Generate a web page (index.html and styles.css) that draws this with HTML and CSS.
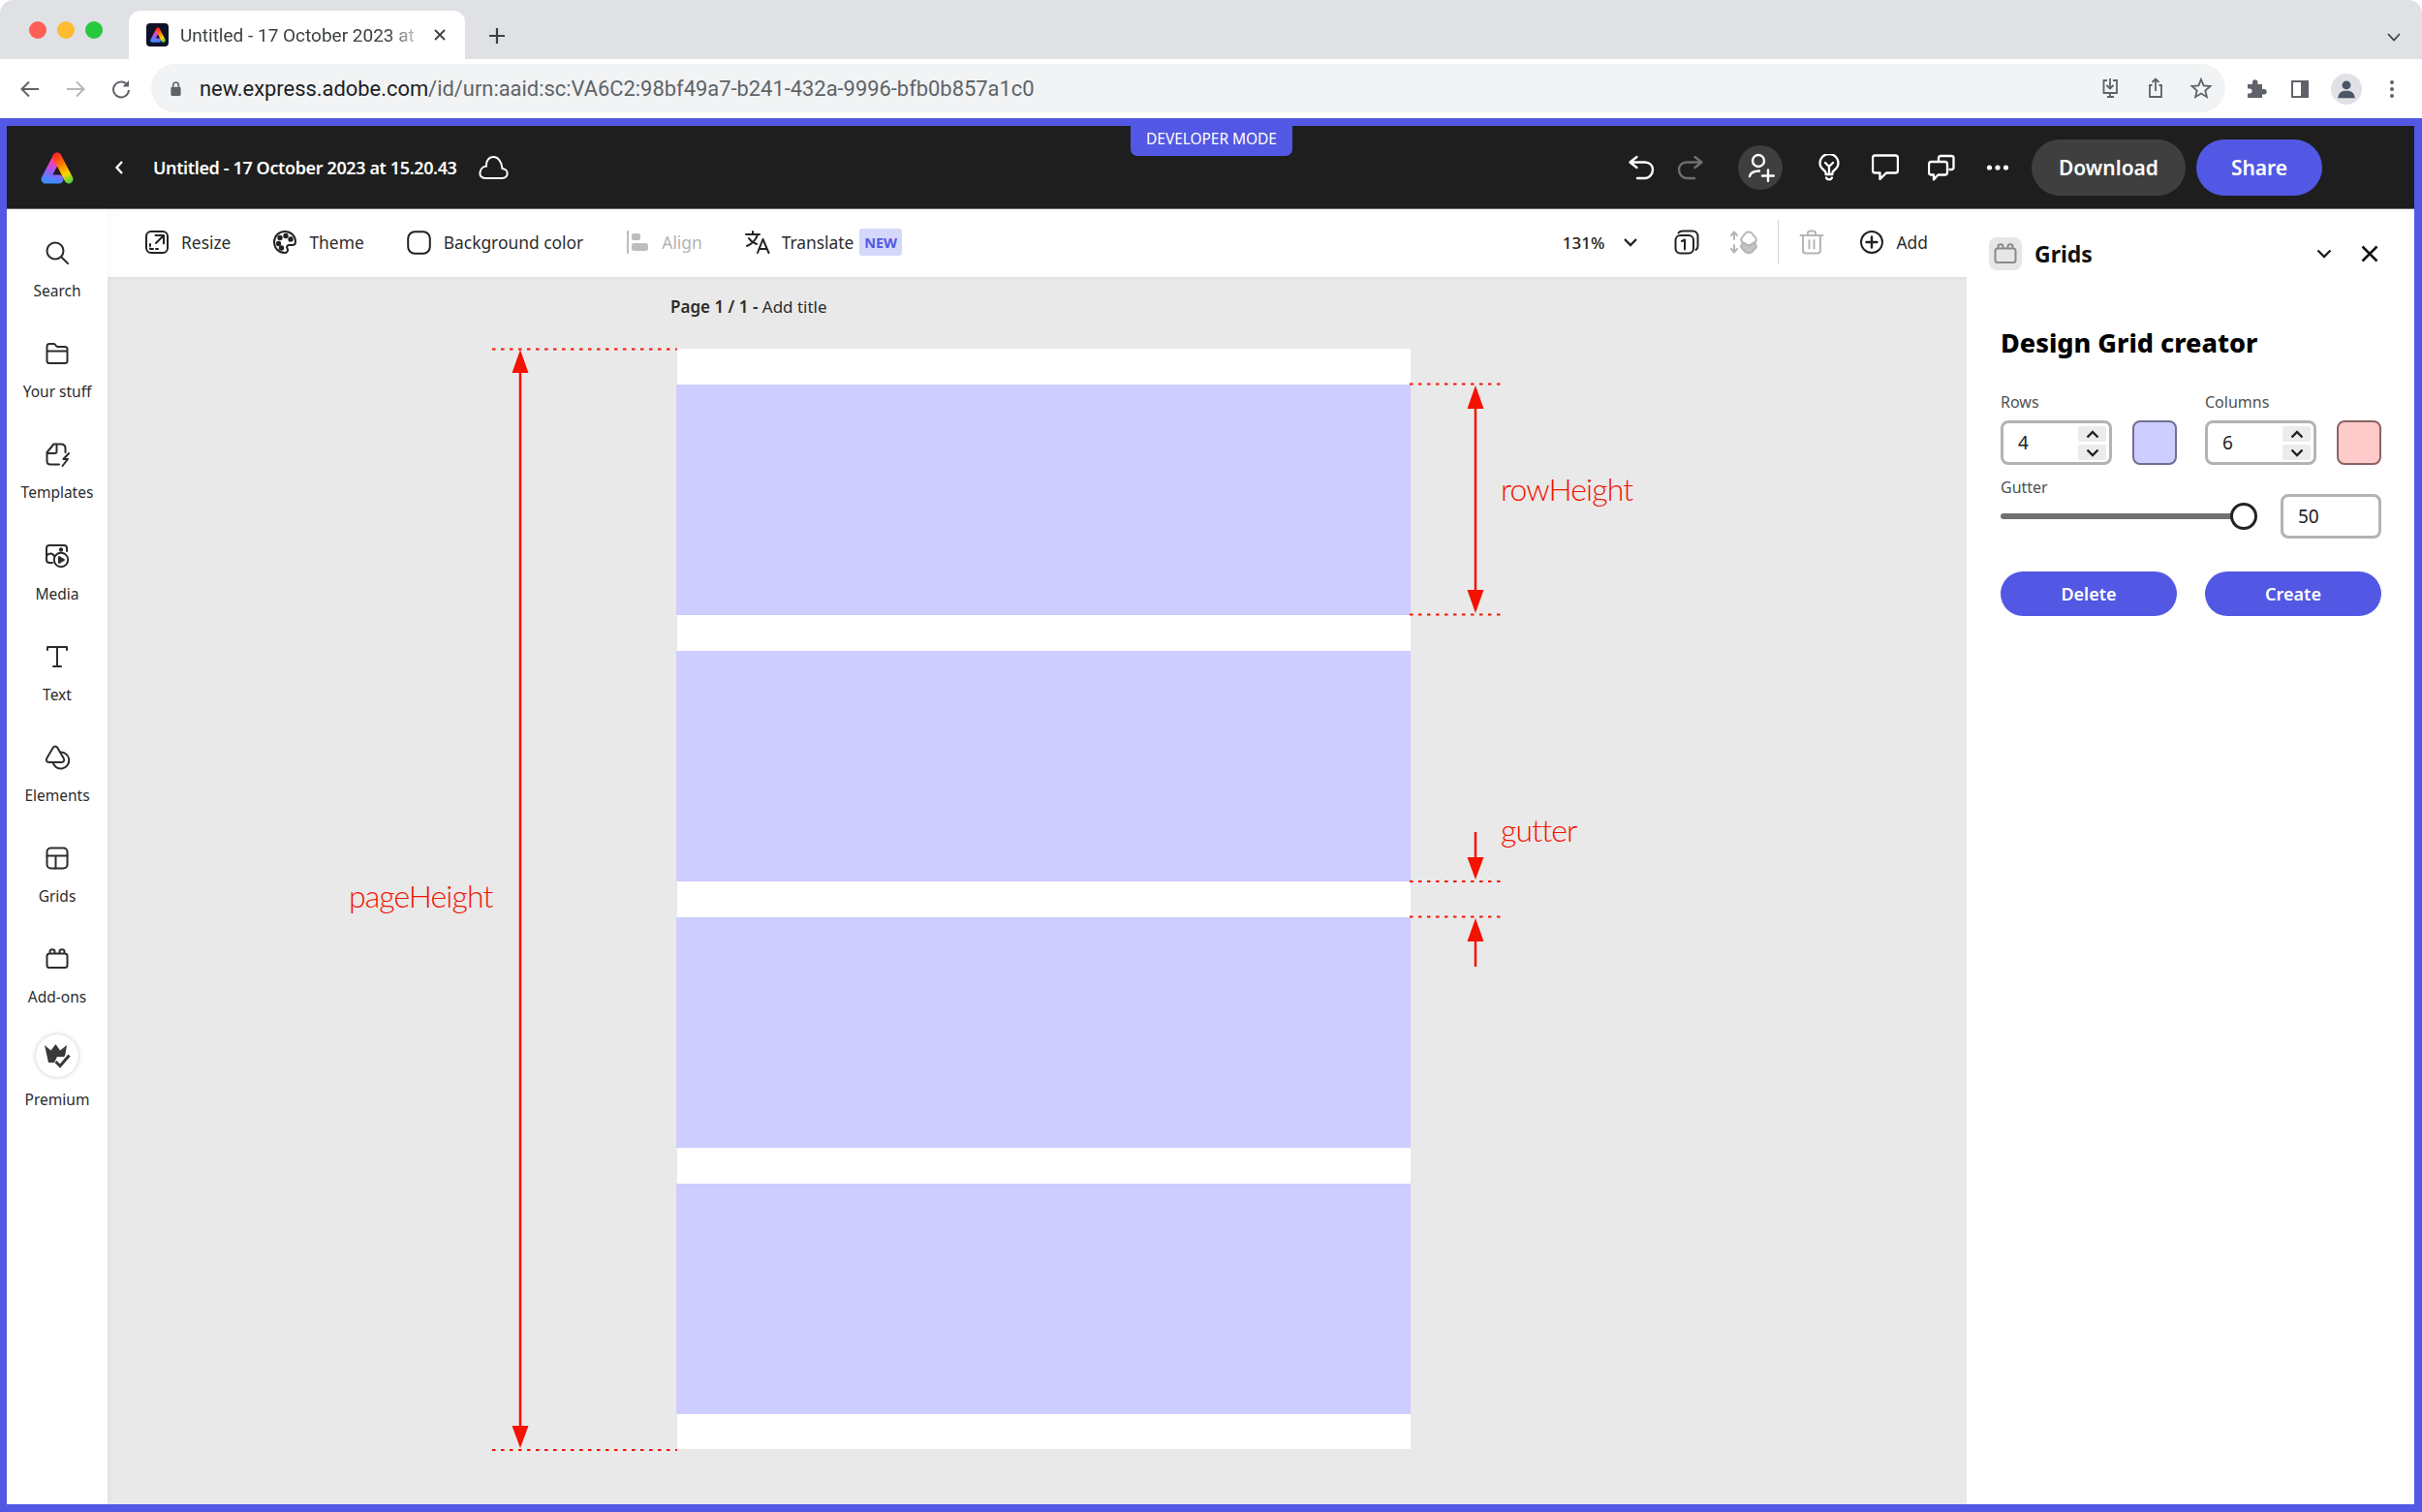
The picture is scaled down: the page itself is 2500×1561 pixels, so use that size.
FILE: index.html
```html
<!DOCTYPE html>
<html lang="en">
<head>
<meta charset="utf-8">
<title>Untitled - 17 October 2023 at 15.20.43</title>
<link rel="stylesheet" href="styles.css">
</head>
<body>
<div class="browser">
  <div class="tabstrip">
    <div class="lights"><i class="light red"></i><i class="light yellow"></i><i class="light green"></i></div>
    <div class="tab">
      <span class="favicon"><svg viewBox="0 0 34 34" width="16" height="16"><path d="M17 6 5 29H19" stroke="url(#logoL)" stroke-width="9" stroke-linecap="round" stroke-linejoin="round" fill="none"/><path d="M17 6 29 29" stroke="url(#logoR)" stroke-width="9" stroke-linecap="round" fill="none"/></svg></span>
      <span class="tab-title">Untitled - 17 October 2023 at</span>
      <svg class="tab-close" viewBox="0 0 12 12" width="12" height="12"><path d="M1 1 11 11M11 1 1 11" stroke="#3c4043" stroke-width="1.8" fill="none"/></svg>
    </div>
    <svg class="tab-new" viewBox="0 0 18 18" width="18" height="18"><path d="M9 1V17M1 9H17" stroke="#3c4043" stroke-width="2.2" fill="none"/></svg>
    <svg class="tab-menu" viewBox="0 0 14 9" width="14" height="9"><path d="M1 1 7 7.5 13 1" stroke="#3c4043" stroke-width="1.8" fill="none"/></svg>
  </div>
  <div class="navbar">
    <svg class="nav-ic" viewBox="0 0 24 24"><path d="M21 12H4M11 4.5 3.5 12 11 19.5" stroke="#5f6368" stroke-width="2" fill="none"/></svg>
    <svg class="nav-ic" viewBox="0 0 24 24"><path d="M3 12H20M13 4.5 20.5 12 13 19.5" stroke="#b4b7bb" stroke-width="2" fill="none"/></svg>
    <svg class="nav-ic" viewBox="0 0 24 24"><path d="M19 8.5A8 8 0 1 0 20 13" stroke="#5f6368" stroke-width="2" fill="none"/><path d="M20 3V9.5H13.5Z" fill="#5f6368"/></svg>
    <div class="omnibox">
      <svg class="lock" viewBox="0 0 14 18" width="13" height="17"><path d="M4 7V5a3 3 0 0 1 6 0v2" stroke="#5f6368" stroke-width="1.8" fill="none"/><rect x="1.5" y="7" width="11" height="10" rx="1.5" fill="#5f6368"/></svg>
      <span class="url"><span class="url-host">new.express.adobe.com</span>/id/urn:aaid:sc:VA6C2:98bf49a7-b241-432a-9996-bfb0b857a1c0</span>
      <div class="omni-icons">
        <svg class="nav-ic" viewBox="0 0 24 24"><path d="M9 4H5.500V17H19V4H15M12 2V12M8.500 9 12 12.500 15.500 9M9 21H16M12 17V21" stroke="#5f6368" stroke-width="1.800" fill="none"/></svg>
        <svg class="nav-ic" viewBox="0 0 24 24"><path d="M8.500 9H6V21H18V9H15.500M12 15V2.500M8.500 6 12 2.500 15.500 6" stroke="#5f6368" stroke-width="1.800" fill="none"/></svg>
        <svg class="nav-ic" viewBox="0 0 24 24"><path d="M12 3 14.600 9.400 21.500 10 16.300 14.500 17.900 21.200 12 17.600 6.100 21.200 7.700 14.500 2.500 10 9.400 9.400Z" stroke="#5f6368" stroke-width="1.800" fill="none"/></svg>
      </div>
    </div>
    <div class="ext-icons">
      <svg class="nav-ic" viewBox="0 0 24 24"><path d="M4 8H9V6A2.700 2.700 0 0 1 14.400 6V8H19V13H21A2.700 2.700 0 0 1 21 18.400H19V22H4V17.500H6A2.500 2.500 0 0 0 6 12.500H4Z" fill="#5f6368" transform="translate(0 -1)"/></svg>
      <svg class="nav-ic" viewBox="0 0 24 24"><rect x="4" y="4" width="16" height="16" fill="none" stroke="#5f6368" stroke-width="2"/><rect x="13" y="4" width="7" height="16" fill="#5f6368"/></svg>
      <span class="avatar"><svg viewBox="0 0 24 24" width="28" height="28"><circle cx="12" cy="8.500" r="3.800" fill="#4a5568"/><path d="M4.500 20C5 15 8 13.500 12 13.500S19 15 19.500 20Z" fill="#4a5568"/></svg></span>
      <svg class="nav-ic" viewBox="0 0 24 24"><circle cx="12" cy="5" r="2" fill="#5f6368"/><circle cx="12" cy="12" r="2" fill="#5f6368"/><circle cx="12" cy="19" r="2" fill="#5f6368"/></svg>
    </div>
  </div>

  <div class="app">
    <header class="topbar">
      <div class="dev-badge">DEVELOPER MODE</div>
      <div class="top-left">
        <svg class="logo" viewBox="0 0 34 34" width="34" height="34"><defs>
          <linearGradient id="logoR" gradientUnits="userSpaceOnUse" x1="15" y1="0" x2="30" y2="34"><stop offset="0" stop-color="#ff0f2f"/><stop offset=".4" stop-color="#ff7a00"/><stop offset=".7" stop-color="#ffd400"/><stop offset="1" stop-color="#35d24a"/></linearGradient>
          <linearGradient id="logoL" gradientUnits="userSpaceOnUse" x1="17" y1="0" x2="8" y2="32"><stop offset="0" stop-color="#ff1030"/><stop offset=".35" stop-color="#ff3fa6"/><stop offset=".62" stop-color="#a954f5"/><stop offset=".95" stop-color="#3f8cff"/></linearGradient>
        </defs><path d="M17 6 5 29H19" stroke="url(#logoL)" stroke-width="9" stroke-linecap="round" stroke-linejoin="round" fill="none"/><path d="M17 6 29 29" stroke="url(#logoR)" stroke-width="9" stroke-linecap="round" fill="none"/></svg>
        <svg class="back" viewBox="0 0 10 16" width="10" height="16"><path d="M8 2 2.500 8 8 14" stroke="#fff" stroke-width="2.400" fill="none"/></svg>
        <span class="doc-title">Untitled - 17 October 2023 at 15.20.43</span>
        <svg class="cloud" viewBox="0 0 32 26" width="32" height="26"><path d="M8 24H25C33 24 32 14.500 25.500 14 25 8 21.500 2 16.500 2 11.500 2 8.500 6.500 9 11.500 2 12 -1 24 8 24Z" stroke="#fff" stroke-width="2" fill="none"/></svg>
      </div>
      <div class="top-right">
        <svg class="top-ic" viewBox="0 0 28 28"><path d="M9.500 3 2.500 8.500 9.500 14M3 8.500H18C23 8.500 26 12 26 16S23 25 18 25H10" stroke="#fff" stroke-width="2.400" stroke-linecap="round" stroke-linejoin="round" fill="none"/></svg>
        <svg class="top-ic" viewBox="0 0 28 28"><path d="M18.500 3 25.500 8.500 18.500 14M25 8.500H10C5 8.500 2 12 2 16S5 25 10 25H18" stroke="#6f6f6f" stroke-width="2.400" stroke-linecap="round" stroke-linejoin="round" fill="none"/></svg>
        <span class="invite"><svg viewBox="0 0 30 30" width="30" height="30"><circle cx="13" cy="8" r="6" stroke="#fff" stroke-width="2.400" fill="none"/><path d="M4 24C5 20 9 18.500 14 18.500M17 23.500H29M23 17.500V29" stroke="#fff" stroke-width="2.400" stroke-linecap="round" fill="none"/></svg></span>
        <svg class="top-ic" viewBox="0 0 28 28"><path d="M10.500 21V19C10.500 17 4.500 15.500 4.500 9.500A9.500 9.500 0 0 1 23.500 9.500C23.500 15.500 17.500 17 17.500 19V21ZM11 24.500C12 27 16 27 17 24.500M10 9 14 13 18 9M14 13V20" stroke="#fff" stroke-width="2.300" stroke-linejoin="round" stroke-linecap="round" fill="none"/></svg>
        <svg class="top-ic" viewBox="0 0 28 28"><path d="M3.500 1.500H24.500C26 1.500 27 2.500 27 4V17C27 18.500 26 19.500 24.500 19.500H15L8.500 26V19.500H3.500C2 19.500 1 18.500 1 17V4C1 2.500 2 1.500 3.500 1.500Z" stroke="#fff" stroke-width="2.400" stroke-linejoin="round" fill="none"/></svg>
        <svg class="top-ic" viewBox="0 0 28 28"><path d="M11 7V4C11 3 12 2 13 2H24C25.500 2 26.500 3 26.500 4V14C26.500 15 25.500 16 24 16H21.500M3.500 8H17.500C19 8 20 9 20 10.500V19C20 20.500 19 21.500 17.500 21.500H10.500L6 26.500V21.500H3.500C2 21.500 1 20.500 1 19V10.500C1 9 2 8 3.500 8Z" stroke="#fff" stroke-width="2.300" stroke-linejoin="round" fill="none"/></svg>
        <svg class="top-ic" viewBox="0 0 28 28"><circle cx="5.500" cy="14" r="2.600" fill="#fff"/><circle cx="14" cy="14" r="2.600" fill="#fff"/><circle cx="22.500" cy="14" r="2.600" fill="#fff"/></svg>
        <button class="pill dark">Download</button>
        <button class="pill blue">Share</button>
      </div>
    </header>

    <div class="workspace">
      <nav class="rail">
        <div class="rail-item"><span class="rail-ic"><svg viewBox="0 0 24 24"><circle cx="10" cy="10" r="8.500"/><path d="M16 16 23 23"/></svg></span><span class="rail-label">Search</span></div>
        <div class="rail-item"><span class="rail-ic"><svg viewBox="0 0 24 24"><path d="M1.500 8V4.500C1.500 3 2.500 2 4 2H8.500C10.500 2 10.500 5 12.500 5H20C21.500 5 22.500 6 22.500 7.500V19.500C22.500 21 21.500 22 20 22H4C2.500 22 1.500 21 1.500 19.500ZM1.500 9.500H22.500"/></svg></span><span class="rail-label">Your stuff</span></div>
        <div class="rail-item"><span class="rail-ic"><svg viewBox="0 0 24 24"><path d="M14 22.500H5C3 22.500 1.500 21.500 1.500 19V10L8.500 1.500H16C19 1.500 20.500 3 20.500 6V10M1.500 11H9.500C11 11 11.500 10 11.500 9V1.500M24 11 18.500 17H23L17.500 24"/></svg></span><span class="rail-label">Templates</span></div>
        <div class="rail-item"><span class="rail-ic"><svg viewBox="0 0 24 24"><path d="M7 19H4C2 19 1 18 1 16V4C1 2 2 1 4 1H19C21 1 22 2 22 4V7M1 12C3 9 7 8 9.500 12.500"/><circle cx="16" cy="16" r="7.200"/><path d="M14 13V19L19 16Z" fill="#2c2c2c"/><circle cx="16" cy="5.500" r="1.200" fill="#2c2c2c"/></svg></span><span class="rail-label">Media</span></div>
        <div class="rail-item"><span class="rail-ic"><svg viewBox="0 0 24 24"><path d="M2 5V2H22V5M12 2V22M8 22H16"/></svg></span><span class="rail-label">Text</span></div>
        <div class="rail-item"><span class="rail-ic"><svg viewBox="0 0 24 24"><path d="M8 1.500C9 0 11 0 12 1.500L18.500 12.500C20 15 19 17 16.500 17H3.500C1 17 0 15 1.500 12.500Z"/><path d="M16 6.500A8.500 8.500 0 1 1 7.500 17"/></svg></span><span class="rail-label">Elements</span></div>
        <div class="rail-item"><span class="rail-ic"><svg viewBox="0 0 24 24"><rect x="1.500" y="1.500" width="21" height="21" rx="4"/><path d="M1.500 9.500H22.500M10.500 9.500V22.500"/></svg></span><span class="rail-label">Grids</span></div>
        <div class="rail-item"><span class="rail-ic"><svg viewBox="0 0 24 24"><path d="M4 6.500H20C21.500 6.500 22.500 7.500 22.500 9V18.500C22.500 20 21.500 21 20 21H4C2.500 21 1.500 20 1.500 18.500V9C1.500 7.500 2.500 6.500 4 6.500ZM4.500 6.500V4.500C4.500 1.500 9.500 1.500 9.500 4.500V6.500M14.500 6.500V4.500C14.500 1.500 19.500 1.500 19.500 4.500V6.500"/></svg></span><span class="rail-label">Add-ons</span></div>
        <div class="rail-item premium"><span class="premium-ic"><svg viewBox="0 0 28 28" width="28" height="28"><path d="M1 3 7.500 8.500 12.500 2 17 8.500 24 3 22 15H14L11 21H5Z" fill="#3a3a3a"/><path d="M12.500 20 17 24.500 26.500 13.500" stroke="#fff" stroke-width="6.500" fill="none"/><path d="M12.500 20 17 24.500 26.500 13.500" stroke="#3a3a3a" stroke-width="3" fill="none"/></svg></span><span class="rail-label">Premium</span></div>
      </nav>

      <main class="main">
        <div class="toolbar">
          <div class="tools">
            <div class="tool"><svg class="tool-ic" viewBox="0 0 24 24"><rect x="1" y="1" width="22" height="22" rx="5"/><path d="M10.500 5H19V13.500M19 5 11 13" /><path d="M5 14V16M5 18.500V19H8M11 19H13"/></svg><span>Resize</span></div>
            <div class="tool"><svg class="tool-ic" viewBox="0 0 24 24"><path d="M12 1C5.500 1 1 6 1 12S5.500 23 12 23C15 23 15.500 20 14.500 18.500 13.500 16.500 14.500 15 17 15H19.500C22 15 23 13.500 23 11.500 23 5.500 18 1 12 1Z"/><circle cx="7" cy="7.500" r="1.700" fill="#222"/><circle cx="13" cy="5.500" r="1.700" fill="#222"/><circle cx="18" cy="9" r="1.700" fill="#222"/><circle cx="5.500" cy="13.500" r="1.700" fill="#222"/><circle cx="8.500" cy="18" r="1.700" fill="#222"/></svg><span>Theme</span></div>
            <div class="tool"><svg class="tool-ic wide" viewBox="0 0 25 25"><rect x="1.200" y="1.200" width="22.600" height="22.600" rx="7"/></svg><span>Background color</span></div>
            <div class="tool off"><svg class="tool-ic" viewBox="0 0 24 24"><path d="M2 1V23" stroke="#bdbdbd"/><rect x="6" y="3" width="9" height="7" rx="2" fill="#bdbdbd" stroke="none"/><rect x="6" y="13" width="17" height="8" rx="2.500" fill="#bdbdbd" stroke="none"/></svg><span>Align</span></div>
            <div class="tool"><svg class="tool-ic trans" viewBox="0 0 26 24"><path d="M1 4H15M8 1V4M13 4C12 9 7 14 2 16M4 8C6 11 9 13 12 14M13 23 18.500 9 24.500 23M15 19H22.500"/></svg><span class="translate">Translate</span><b class="badge-new">NEW</b></div>
          </div>
          <div class="tools-right">
            <span class="zoom-val">131%</span>
            <svg class="chev" viewBox="0 0 14 9" width="14" height="9"><path d="M1 1 7 7 13 1" stroke="#222" stroke-width="2.400" fill="none"/></svg>
            <svg class="tool-ic pages" viewBox="0 0 26 26"><rect x="1.500" y="6" width="18.500" height="18.500" rx="5"/><path d="M4.500 3.500C5.500 2 7 1.500 9 1.500H19C22.500 1.500 24.500 4 24.500 7V17C24.500 19 24 20 22.500 21"/><path d="M8 12 11 10.500V20.500"/></svg>
            <svg class="tool-ic grey reorder" viewBox="0 0 28 24"><path d="M4 9V2.500M1 5 4 1.500 7 5M4 15V21.500M1 19 4 22.500 7 19"/><path d="M11.500 8 15.500 3C17 1 21 1 22.500 3L26.500 8C27 9 27 10 26.500 11L23 15H15L11.500 11C11 10 11 9 11.500 8Z"/><path d="M11.500 15 14 12.500 19 16 24 12.500 26.500 15C27 16 27 17 26.500 17.500L22.500 22C21 23.500 17 23.500 15.500 22L11.500 17.500C11 17 11 16 11.500 15Z" fill="#c4c4c4"/></svg>
            <i class="divider"></i>
            <svg class="tool-ic grey trash" viewBox="0 0 26 26"><path d="M1.500 6H24.500M9 6V4C9 2.500 10 1.500 11.500 1.500H14.500C16 1.500 17 2.500 17 4V6M4 6V21.500C4 23.500 5 24.500 7 24.500H19C21 24.500 22 23.500 22 21.500V6M10.500 11V19.500M15.500 11V19.500"/></svg>
            <div class="tool add"><svg class="tool-ic" viewBox="0 0 24 24"><circle cx="12" cy="12" r="11"/><path d="M12 6.500V17.500M6.500 12H17.500" stroke-width="2.400"/></svg><span>Add</span></div>
          </div>
        </div>
        <div class="canvas">
          <div class="page-title"><b>Page 1 / 1 -</b> Add title</div>
          <div class="page">
            <div class="grid-row"></div>
            <div class="grid-row"></div>
            <div class="grid-row"></div>
            <div class="grid-row"></div>
          </div>
          <svg class="notes" viewBox="111 286 1919 1267" width="1919" height="1267">
            <g class="dash">
              <path d="M508 360.500H699"/><path d="M508 1497H699"/>
              <path d="M1455 396.500H1550"/><path d="M1455 634.500H1550"/>
              <path d="M1455 910H1550"/><path d="M1455 946.500H1550"/>
            </g>
            <g class="shaft">
              <path d="M537 380V1476"/><path d="M1523 418V613"/><path d="M1523 859V890"/><path d="M1523 968V998"/>
            </g>
            <g class="head">
              <path d="M537 361 545.500 385H528.500Z"/><path d="M537 1495 545.500 1472H528.500Z"/>
              <path d="M1523 398 1531.500 422H1514.500Z"/><path d="M1523 633 1531.500 609H1514.500Z"/>
              <path d="M1523 908 1531.500 885H1514.500Z"/><path d="M1523 948 1531.500 972H1514.500Z"/>
            </g>
            <text class="note" x="360" y="937">pageHeight</text>
            <text class="note" x="1549" y="517">rowHeight</text>
            <text class="note" x="1549" y="869">gutter</text>
          </svg>
        </div>
      </main>

      <aside class="panel">
        <div class="panel-head">
          <span class="panel-tile"><svg viewBox="0 0 24 24" width="24" height="24"><path d="M4 6.500H20C21.500 6.500 22.500 7.500 22.500 9V18.500C22.500 20 21.500 21 20 21H4C2.500 21 1.500 20 1.500 18.500V9C1.500 7.500 2.500 6.500 4 6.500ZM4.500 6.500V4.500C4.500 1.500 9.500 1.500 9.500 4.500V6.500M14.500 6.500V4.500C14.500 1.500 19.500 1.500 19.500 4.500V6.500" stroke="#8a8a8a" stroke-width="2" fill="none"/></svg></span>
          <span class="panel-name">Grids</span>
          <svg class="panel-chev" viewBox="0 0 16 10" width="16" height="10"><path d="M1.500 1.500 8 8 14.500 1.500" stroke="#222" stroke-width="2.400" fill="none"/></svg>
          <svg class="panel-x" viewBox="0 0 18 18" width="18" height="18"><path d="M1.500 1.500 16.500 16.500M16.500 1.500 1.500 16.500" stroke="#111" stroke-width="2.600" fill="none"/></svg>
        </div>
        <div class="panel-body">
          <h1 class="panel-h">Design Grid creator</h1>
          <div class="pair-row">
            <div class="pair">
              <label class="fld-label">Rows</label>
              <div class="pair-fields">
                <div class="num"><span class="num-val">4</span><span class="stepper"><i class="step"><svg viewBox="0 0 14 9" width="14" height="9"><path d="M1.500 7.500 7 2 12.500 7.500" stroke="#222" stroke-width="2.400" fill="none"/></svg></i><i class="step"><svg viewBox="0 0 14 9" width="14" height="9"><path d="M1.500 1.500 7 7 12.500 1.500" stroke="#222" stroke-width="2.400" fill="none"/></svg></i></span></div>
                <i class="swatch lilac"></i>
              </div>
            </div>
            <div class="pair">
              <label class="fld-label">Columns</label>
              <div class="pair-fields">
                <div class="num"><span class="num-val">6</span><span class="stepper"><i class="step"><svg viewBox="0 0 14 9" width="14" height="9"><path d="M1.500 7.500 7 2 12.500 7.500" stroke="#222" stroke-width="2.400" fill="none"/></svg></i><i class="step"><svg viewBox="0 0 14 9" width="14" height="9"><path d="M1.500 1.500 7 7 12.500 1.500" stroke="#222" stroke-width="2.400" fill="none"/></svg></i></span></div>
                <i class="swatch pink"></i>
              </div>
            </div>
          </div>
          <label class="fld-label gutter-label">Gutter</label>
          <div class="gutter-row">
            <div class="slider"><i class="knob"></i></div>
            <div class="num value"><span class="num-val">50</span></div>
          </div>
          <div class="actions">
            <button class="act">Delete</button>
            <button class="act">Create</button>
          </div>
        </div>
      </aside>
    </div>
  </div>
</div>
</body>
</html>
```
FILE: styles.css
```css
* { box-sizing: border-box; }
html, body { margin: 0; padding: 0; background: #fff; }
body { width: 2500px; height: 1561px; overflow: hidden; font-family: "Noto Sans", "Open Sans", sans-serif; }
svg { display: block; flex: none; }
button { font-family: inherit; border: 0; padding: 0; }

.browser { width: 2500px; height: 1561px; display: flex; flex-direction: column; }

/* browser chrome */
.tabstrip { height: 61px; flex: none; background: #dfe1e5; border-radius: 14px 14px 0 0; display: flex; align-items: flex-end; padding-left: 30px; position: relative; }
.lights { display: flex; gap: 11px; align-self: flex-start; margin-top: 22px; width: 103px; }
.light { width: 18px; height: 18px; border-radius: 50%; display: block; }
.red { background: #ff5f57; }
.yellow { background: #febc2e; }
.green { background: #28c840; }
.tab { width: 347px; height: 50px; background: #fff; border-radius: 12px 12px 0 0; display: flex; align-items: center; padding-left: 18px; position: relative; }
.favicon { width: 23px; height: 24px; background: #10122a; border-radius: 4px; display: flex; align-items: center; justify-content: center; }
.tab-title { font: 19px "Roboto", sans-serif; color: #3c4043; margin-left: 12px; width: 244px; white-space: nowrap; -webkit-mask-image: linear-gradient(to right, #000 88%, rgba(0,0,0,.25) 100%); mask-image: linear-gradient(to right, #000 88%, rgba(0,0,0,.25) 100%); }
.tab-close { margin-left: 18px; }
.tab-new { margin: 0 0 15px 24px; }
.tab-menu { position: absolute; right: 22px; top: 34px; }

.navbar { height: 61px; flex: none; background: #fff; display: flex; align-items: center; padding-left: 19px; }
.nav-ic { width: 24px; height: 24px; margin-right: 23px; }
.navbar > .nav-ic:nth-of-type(3) { margin-right: 19px; }
.omnibox { width: 2141px; height: 50px; margin-top: -1px; background: #f1f3f4; border-radius: 25px; display: flex; align-items: center; padding-left: 19px; }
.lock { margin-right: 18px; }
.url { font: 21.900px "Roboto", sans-serif; color: #5f6368; white-space: nowrap; }
.url-host { color: #202124; }
.omni-icons { margin-left: auto; display: flex; }
.omni-icons .nav-ic:last-child { margin-right: 13px; }
.ext-icons { display: flex; align-items: center; margin-left: 19px; }
.ext-icons .nav-ic { margin-right: 22px; }
.ext-icons .nav-ic:last-child { margin-right: 0; }
.avatar { width: 32px; height: 32px; margin-right: 19px; margin-left: -2px; background: #dfe1e5; border-radius: 50%; display: flex; align-items: center; justify-content: center; }

/* app shell */
.app { flex: 1; min-height: 0; border: solid #5258e3; border-width: 8px 8px 8px 7px; display: flex; flex-direction: column; }
.topbar { height: 86px; flex: none; background: #1e1e1e; border-bottom: 1px solid #6b6b6b; display: flex; align-items: center; justify-content: space-between; position: relative; padding: 0 95px 0 35px; color: #fff; }
.dev-badge { position: absolute; left: 1160px; top: 0; width: 167px; height: 31px; padding-bottom: 6px; background: #5258e3; border-radius: 0 0 7px 7px; font-size: 15.500px; letter-spacing: -.05px; display: flex; align-items: center; justify-content: center; color: #fff; }
.top-left { display: flex; align-items: center; }
.back { margin-left: 42px; }
.doc-title { font-size: 18px; font-weight: 600; letter-spacing: -.38px; margin-left: 30px; white-space: nowrap; }
.cloud { margin-left: 22px; }
.top-right { display: flex; align-items: center; }
.top-ic { width: 28px; height: 28px; margin-right: 21px; }
.invite { width: 46px; height: 46px; border-radius: 50%; background: #3f3f3f; display: flex; align-items: center; justify-content: center; margin-right: 34px; }
.top-right .top-ic:nth-of-type(1) { margin-right: 23px; }
.top-right .top-ic:nth-of-type(2) { margin-right: 35px; }
.top-right .top-ic:nth-of-type(3) { margin-right: 30px; }
.top-right .top-ic:nth-of-type(4) { margin-right: 30px; }
.top-right .top-ic:nth-of-type(5) { margin-right: 30px; }
.pill { height: 58px; border-radius: 29px; color: #fff; font-size: 21px; font-weight: 600; }
.pill.dark { width: 159px; background: #3f3f3f; margin-right: 11px; }
.pill.blue { width: 130px; background: #5258e3; }

.workspace { flex: 1; min-height: 0; display: flex; }

/* left rail */
.rail { width: 104px; flex: none; background: #fff; display: flex; flex-direction: column; padding-top: 17px; position: relative; z-index: 2; box-shadow: 2px 0 6px rgba(0,0,0,.04); }
.rail-item { height: 104.200px; display: flex; flex-direction: column; align-items: center; flex: none; }
.rail-ic { width: 24px; height: 24px; margin-top: 16px; }
.rail-ic svg { width: 24px; height: 24px; fill: none; stroke: #2c2c2c; stroke-width: 2; stroke-linejoin: round; stroke-linecap: round; overflow: visible; }
.rail-label { font-size: 15.500px; color: #2c2c2c; margin-top: 16px; line-height: 22px; white-space: nowrap; }
.premium { margin-top: -11px; }
.premium-ic { width: 44px; height: 44px; border-radius: 50%; background: #fff; box-shadow: 0 0 5px rgba(0,0,0,.22); display: flex; align-items: center; justify-content: center; margin-top: 12px; }
.premium .rail-label { margin-top: 12px; }

/* toolbar */
.main { flex: 1; min-width: 0; display: flex; flex-direction: column; }
.toolbar { height: 70px; flex: none; background: #fff; display: flex; align-items: center; justify-content: space-between; padding: 0 40px 2px 39px; box-shadow: 0 1px 4px rgba(0,0,0,.05); position: relative; z-index: 1; }
.tools, .tools-right { display: flex; align-items: center; }
.tools { gap: 44px; }
.tool { display: flex; align-items: center; gap: 13px; font-size: 17.400px; color: #2c2c2c; white-space: nowrap; }
.tool.off { color: #b3b3b3; }
.tool-ic { width: 24px; height: 24px; fill: none; stroke: #222; stroke-width: 2; stroke-linecap: round; stroke-linejoin: round; overflow: visible; }
.tool-ic.wide { width: 25px; height: 25px; }
.tool-ic.trans { width: 26px; height: 24px; }
.tool-ic.grey { stroke: #b5b5b5; }
.tool-ic.pages { width: 26px; height: 26px; margin-left: 38px; }
.tool-ic.reorder { width: 28px; height: 24px; margin-left: 32px; }
.tool-ic.trash { width: 26px; height: 26px; margin-left: 21px; }
.translate { margin-left: -1px; letter-spacing: -.05px; }
.badge-new { background: #d6d8fb; color: #5258e3; font-size: 14.500px; font-weight: 700; padding: 0 5px; height: 28px; line-height: 28px; border-radius: 3px; margin-left: -7px; }
.zoom-val { font-size: 17px; color: #222; font-weight: 500; }
.chev { margin-left: 20px; }
.divider { width: 1px; height: 46px; background: #d5d5d5; margin-left: 21px; display: block; }
.add { margin-left: 37px; }

/* canvas */
.canvas { flex: 1; min-height: 0; background: #e9e9e9; position: relative; display: flex; flex-direction: column; padding: 19px 0 0 581px; }
.page-title { font-size: 17px; color: #2c2c2c; line-height: 24px; height: 55px; }
.page-title b { font-weight: 600; }
.page { width: 757px; height: 1136px; margin-left: 7px; background: #fff; display: flex; flex-direction: column; padding-top: 36.700px; gap: 36.600px; }
.grid-row { height: 238.400px; background: #cdcdff; flex: none; margin-left: -1px; }
.notes { position: absolute; left: 0; top: 0; pointer-events: none; }
.dash path { stroke: #f41200; stroke-width: 2; stroke-dasharray: 3.500 5.500; fill: none; }
.shaft path { stroke: #f41200; stroke-width: 2.500; fill: none; }
.head path { fill: #f41200; }
.note { font-family: "Lato", "Open Sans", sans-serif; font-weight: 300; font-size: 32px; letter-spacing: -.9px; fill: #f41200; }

/* right panel */
.panel { width: 462px; flex: none; background: #fff; position: relative; z-index: 2; padding: 29px 34px 0 23px; }
.panel-head { display: flex; align-items: center; height: 34px; }
.panel-tile { width: 34px; height: 34px; background: #e6e6e6; border-radius: 8px; display: flex; align-items: center; justify-content: center; }
.panel-name { font-size: 23px; font-weight: 700; color: #111; margin-left: 13px; }
.panel-chev { margin-left: auto; margin-right: 30px; }
.panel-x { margin-right: 3px; }
.panel-body { padding: 57px 0 0 12px; }
.panel-h { font-size: 27px; font-weight: 800; color: #000; margin: 0; line-height: 36px; white-space: nowrap; }
.pair-row { display: flex; gap: 29px; margin-top: 33px; }
.pair { width: 182px; flex: none; }
.fld-label { display: block; font-size: 16px; color: #505050; line-height: 20px; }
.pair-fields { display: flex; justify-content: space-between; margin-top: 9px; }
.num { width: 115px; height: 46px; border: 3px solid #b3b3b3; border-radius: 8px; background: #fff; display: flex; align-items: center; padding-left: 15px; position: relative; font-size: 19px; color: #222; }
.num-val { line-height: 1; }
.stepper { position: absolute; right: 3px; top: 3px; display: flex; flex-direction: column; gap: 3px; }
.step { width: 29px; height: 16px; background: #ececec; border-radius: 2px; display: flex; align-items: center; justify-content: center; }
.swatch { width: 46px; height: 46px; border-radius: 8px; display: block; border: 2px solid; }
.lilac { background: #cdcdff; border-color: #6f6f93; }
.pink { background: #ffcaca; border-color: #8a6464; }
.gutter-label { margin-top: 13px; }
.gutter-row { display: flex; align-items: center; margin-top: -3px; height: 46px; }
.slider { width: 255px; height: 6px; background: #707070; border-radius: 3px; position: relative; margin-right: 34px; flex: none; }
.knob { position: absolute; right: -10px; top: -11px; width: 28px; height: 28px; border: 3px solid #222; border-radius: 50%; background: #fff; display: block; }
.value { width: 104px; padding-left: 15px; flex: none; }
.actions { display: flex; gap: 29px; margin-top: 34px; }
.act { width: 182px; height: 46px; border-radius: 23px; background: #5258e3; color: #fff; font-size: 18px; font-weight: 600; flex: none; }
```
